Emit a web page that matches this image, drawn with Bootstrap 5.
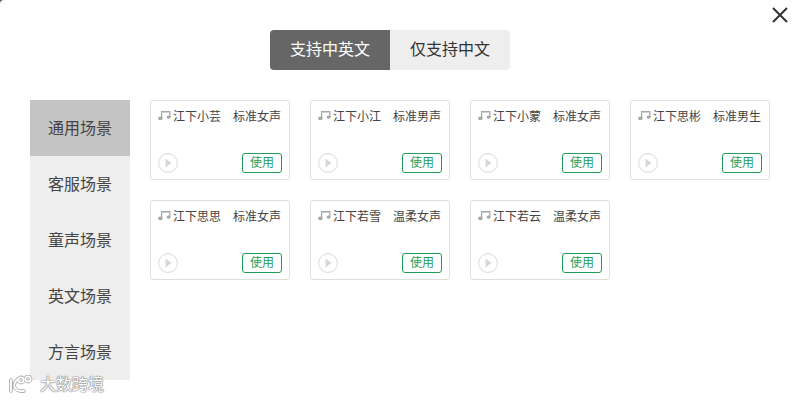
<!DOCTYPE html>
<html lang="zh-CN">
<head>
    <meta charset="UTF-8">
    <title>选择配音</title>
    <link href="https://cdn.jsdelivr.net/npm/bootstrap@5.3.0/dist/css/bootstrap.min.css" rel="stylesheet">
    <style>
        html, body { height: 400px; overflow: hidden; background: #555; }
        body { font-family: "Liberation Sans", "Noto Sans CJK SC", sans-serif; color: #333; }
        .voice-dialog { position: relative; width: 800px; height: 400px; padding: 30px 30px 0; background: #fff; border-radius: 4px 0 0 0; }
        .close-x { position: absolute; top: 6px; right: 11px; width: 18px; height: 18px; padding: 0; border: 0; background: none; line-height: 0; }
        .lang-row { padding-right: 20px; }
        .lang-tab { width: 120px; height: 40px; padding: 0; border: 0; font-size: 16px; line-height: 40px; background: #eee; color: #333; }
        .lang-tab:first-child { border-radius: 4px 0 0 4px; }
        .lang-tab:last-child { border-radius: 0 4px 4px 0; }
        .lang-tab.on { background: #666; color: #fff; }
        .main-row { margin-top: 30px; gap: 20px; }
        .scene-list { width: 100px; height: 280px; background: #eee; }
        .scene-item { height: 56px; padding-top: 1px; line-height: 56px; text-align: center; font-size: 16px; color: #444; }
        .scene-item.on { background: #c4c4c4; }
        .voice-grid { display: grid; grid-template-columns: repeat(4, 140px); grid-auto-rows: 80px; gap: 20px; }
        .voice-card { height: 80px; padding: 8px 8px 6px 7px; border: 1px solid #ddd; border-radius: 3px; font-size: 12px; line-height: 16px; color: #444; }
        .use-btn { width: 40px; height: 20px; margin-right: -1px; padding: 0; font-size: 12px; line-height: 17px; color: #1f9d55; background: #fff; border: 1px solid #1f9d55; border-radius: 3px; }
        .note-name { margin-left: 1px; }
        .watermark { position: absolute; left: 8px; top: 375px; display: flex; align-items: center; gap: 2px; font-size: 16px; line-height: 20px; color: #fff; text-shadow: 0 0 1px #888, 0 0 1px #888, 0 0 1px #888, 0 0 2px #999; }
    </style>
</head>
<body>
    <div class="voice-dialog">
        <button class="close-x" type="button" aria-label="关闭">
            <svg width="18" height="18" viewBox="0 0 18 18"><path d="M2 2 L16 16 M16 2 L2 16" stroke="#333" stroke-width="2" fill="none"/></svg>
        </button>

        <div class="d-flex justify-content-center lang-row">
            <button class="lang-tab on" type="button">支持中英文</button>
            <button class="lang-tab" type="button">仅支持中文</button>
        </div>

        <div class="d-flex main-row">
            <div class="scene-list">
                <div class="scene-item on">通用场景</div>
                <div class="scene-item">客服场景</div>
                <div class="scene-item">童声场景</div>
                <div class="scene-item">英文场景</div>
                <div class="scene-item">方言场景</div>
            </div>
            <div class="voice-grid" id="grid"></div>
        </div>

        <div class="watermark">
            <svg width="30" height="20" viewBox="0 0 30 20" fill="none" stroke-linecap="round">
                <g stroke="#aaa" stroke-width="3.6">
                    <path d="M3 5 V16 M10 4 Q5 9 6.5 12 Q9 17 16 16"/>
                    <circle cx="13" cy="5" r="2.6"/><circle cx="20" cy="4" r="2.6"/>
                </g>
                <g stroke="#fff" stroke-width="1.8">
                    <path d="M3 5 V16 M10 4 Q5 9 6.5 12 Q9 17 16 16"/>
                    <circle cx="13" cy="5" r="2.6"/><circle cx="20" cy="4" r="2.6"/>
                </g>
            </svg>
            <span>大数跨境</span>
        </div>
    </div>

    <script>
        const voices = [
            ["江下小芸", "标准女声"], ["江下小江", "标准男声"], ["江下小蒙", "标准女声"], ["江下思彬", "标准男生"],
            ["江下思思", "标准女声"], ["江下若雪", "温柔女声"], ["江下若云", "温柔女声"]
        ];
        const note = '<svg width="14" height="12" viewBox="0 1.5 14 12" fill="#a6a6a6"><path d="M3 0.5 H12.5 V7.5 H11.3 V3 H4.2 V9 H3 Z"/><ellipse cx="2.3" cy="8.8" rx="2.3" ry="1.9"/><ellipse cx="10.6" cy="7.6" rx="2" ry="1.7"/></svg>';
        const play = '<svg width="20" height="20" viewBox="0 0 20 20"><circle cx="10" cy="10" r="9.4" fill="#fff" stroke="#d8d8d8"/><path d="M7.5 5.5 L13.5 10 L7.5 14.5 Z" fill="#d8d8d8"/></svg>';
        document.getElementById("grid").innerHTML = voices.map(v => `
            <div class="voice-card d-flex flex-column justify-content-between">
                <div class="d-flex justify-content-between align-items-center">
                    <span class="d-flex align-items-center">${note}<span class="note-name">${v[0]}</span></span>
                    <span>${v[1]}</span>
                </div>
                <div class="d-flex justify-content-between align-items-center">
                    <span class="d-flex">${play}</span>
                    <button class="use-btn" type="button">使用</button>
                </div>
            </div>`).join("");
    </script>
    <script src="https://cdn.jsdelivr.net/npm/bootstrap@5.3.0/dist/js/bootstrap.bundle.min.js"></script>
</body>
</html>
